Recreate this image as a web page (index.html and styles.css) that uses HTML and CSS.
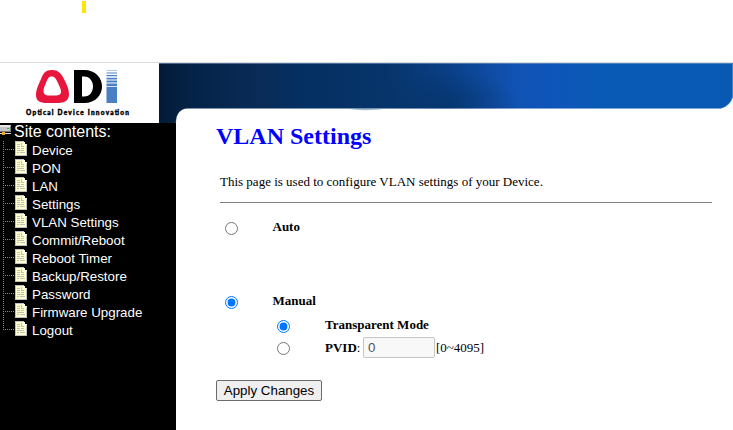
FILE: index.html
```html
<!DOCTYPE html>
<html lang="en">
<head>
<meta charset="utf-8">
<title>VLAN Settings</title>
<link rel="stylesheet" href="styles.css">
</head>
<body>
<svg class="defs" width="0" height="0" aria-hidden="true">
  <symbol id="page" viewBox="0 0 12 15">
    <path fill="#c0c0c0" d="M0 0h9v1h1v2h2v12H0z"/>
    <path fill="#ffffd0" d="M1 1h8v3h2v10H1z"/>
    <path fill="#fff" d="M9 1h1v2h2v1H9z"/>
    <path stroke="#c0c0b8" fill="none" d="M2 3.500h3M6.500 2v4M2 5.500h3M7 5.500h2M2 7.500h3M6 7.500h3M2 9.500h7M2 11.500h2M5 11.500h5"/>
  </symbol>
</svg>
<div class="top"><span class="marker"></span></div>
<header class="header">
  <div class="logo">
    <svg width="159" height="60" viewBox="0 0 159 60">
      <path fill="#e8163c" fill-rule="evenodd" d="M51 7C58 6.500 61 10 64 16C67 22 69 26 69 31C69 38 64 40 57 40H47C40 40 36 38 36 32C36 27 38 23 41 16C43.500 9.500 46 7.200 51 7ZM51.500 13.500C48.500 13.500 47.500 16 46 20C44.500 23.500 43.500 25 43.500 28C43.500 31.500 46 32.500 49 32.500H55C59 32.500 61 31.500 61 28.500C61 26 59.500 23.500 58 20C56 16 55 13.500 51.500 13.500Z"/>
      <path fill="#000" fill-rule="evenodd" d="M74 7H84C108 7 108 40 84 40H74ZM82 13.500V33.500H84C96 33.500 96 13.500 84 13.500Z"/>
      <path fill="#4a80c3" d="M106.500 24h10.500v16h-10.500zM106.500 20.500h10.500v2.800h-10.500zM106.500 17.500h10.500v2h-10.500zM106.500 14.800h10.500v1.600h-10.500zM106.500 12h10.500v1.200h-10.500zM106.500 9.500h10.500v1h-10.500z"/>
      <path fill="#a9c4e4" d="M106.500 7h10.500v1h-10.500z"/>
      <text class="tagline" x="26" y="52" textLength="103" lengthAdjust="spacing">Optical Device Innovation</text>
    </svg>
  </div>
  <svg class="banner" width="574" height="60" viewBox="0 0 574 60">
    <defs>
      <linearGradient id="sea">
        <stop offset="0" stop-color="#031b38"/>
        <stop offset=".06" stop-color="#042347"/>
        <stop offset=".17" stop-color="#0a2b57"/>
        <stop offset=".25" stop-color="#042f62"/>
        <stop offset=".4" stop-color="#07356b"/>
        <stop offset=".5" stop-color="#0a3f86"/>
        <stop offset=".62" stop-color="#1153b4"/>
        <stop offset=".67" stop-color="#0f54b9"/>
        <stop offset=".78" stop-color="#085ab5"/>
        <stop offset="1" stop-color="#0859b3"/>
      </linearGradient>
      <radialGradient id="deep">
        <stop offset="0" stop-color="#042e5c" stop-opacity=".55"/>
        <stop offset="1" stop-color="#042e5c" stop-opacity="0"/>
      </radialGradient>
      <clipPath id="edge"><path d="M0 0H574V34Q571 43 562 45.500H29Q17 46 17 60H0Z"/></clipPath>
    </defs>
    <g clip-path="url(#edge)">
      <path fill="url(#sea)" d="M0 0H574V60H0z"/>
      <ellipse fill="url(#deep)" cx="288" cy="42" rx="75" ry="36"/>
      <path fill="none" stroke="#7999c3" stroke-opacity=".6" d="M0 .5H573.500V34Q571 43 562 45.500H29Q17 46 17 60"/>
    </g>
    <path fill="#668bab" fill-opacity=".6" d="M187 45.500H228Q206 49 187 45.500z"/>
  </svg>
</header>
<div class="main">
  <nav class="side">
    <div class="root">
      <svg width="12" height="14" viewBox="0 0 12 14">
        <path fill="#777" d="M0 3h11v6H0z"/>
        <path fill="#e8e8e8" d="M0 2h11l-1 2H0z"/>
        <path fill="#c4c4c4" d="M0 4h10v4H0z"/>
        <path fill="#2cb52c" d="M7 5h2v1H7z"/>
        <path fill="#ddd" d="M0 10h11v1H0z"/>
        <path fill="#f0a818" d="M2 9h3v3H2z"/>
      </svg>
      <span>Site contents:</span>
    </div>
    <ul class="menu">
      <li><svg class="ico"><use href="#page"/></svg><span>Device</span></li>
      <li><svg class="ico"><use href="#page"/></svg><span>PON</span></li>
      <li><svg class="ico"><use href="#page"/></svg><span>LAN</span></li>
      <li><svg class="ico"><use href="#page"/></svg><span>Settings</span></li>
      <li><svg class="ico"><use href="#page"/></svg><span>VLAN Settings</span></li>
      <li><svg class="ico"><use href="#page"/></svg><span>Commit/Reboot</span></li>
      <li><svg class="ico"><use href="#page"/></svg><span>Reboot Timer</span></li>
      <li><svg class="ico"><use href="#page"/></svg><span>Backup/Restore</span></li>
      <li><svg class="ico"><use href="#page"/></svg><span>Password</span></li>
      <li><svg class="ico"><use href="#page"/></svg><span>Firmware Upgrade</span></li>
      <li><svg class="ico"><use href="#page"/></svg><span>Logout</span></li>
    </ul>
  </nav>
  <main class="content">
    <h1>VLAN Settings</h1>
    <p class="intro">This page is used to configure VLAN settings of your Device.</p>
    <form>
      <div class="row auto"><input type="radio" name="mode"><b>Auto</b></div>
      <div class="row manual"><input type="radio" name="mode" checked><b>Manual</b></div>
      <div class="row sub trans"><input type="radio" name="vlan" checked><b>Transparent Mode</b></div>
      <div class="row sub pvid"><input type="radio" name="vlan"><span class="label"><b>PVID</b>:</span><input class="num" type="text" value="0" disabled><span class="range">[0~4095]</span></div>
      <button class="apply" type="button">Apply Changes</button>
    </form>
  </main>
</div>
</body>
</html>
```
FILE: styles.css
```css
* { box-sizing: border-box; }
body { margin: 0; height: 430px; overflow: hidden; background: #fff; display: flex; flex-direction: column; }
.defs { position: absolute; }
.top { height: 62px; flex: none; padding: 1px 0 0 82px; }
.marker { display: block; width: 4px; height: 12px; background: #ffe500; }
.header { display: flex; flex: none; height: 61px; border-top: 1px solid #dcdcdc; }
.logo { width: 159px; }
.header svg { display: block; }
.tagline { font: 900 6.5px Lato, sans-serif; stroke: #000; stroke-width: .4px; }
.main { display: flex; flex: 1; }
.side { width: 176px; background: #000; color: #fff; font-family: "Liberation Sans", Arial, sans-serif; }
.root { display: flex; height: 18px; font-size: 16px; line-height: 18px; }
.root svg { flex: none; width: 12px; margin-right: 2px; }
.menu { list-style: none; margin: 0 0 0 3px; padding: 0; font-size: 13.33px; }
.menu li {
  display: flex; height: 18px; line-height: 18px;
  background:
    repeating-linear-gradient(90deg, #888 0 1px, transparent 1px 2px) 0 8px / 12px 1px no-repeat,
    repeating-linear-gradient(#888 0 1px, transparent 1px 2px) 0 0 / 1px 18px no-repeat;
}
.menu li:last-child {
  background:
    repeating-linear-gradient(90deg, #888 0 1px, transparent 1px 2px) 0 8px / 12px 1px no-repeat,
    repeating-linear-gradient(#888 0 1px, transparent 1px 2px) 0 0 / 1px 9px no-repeat;
}
.menu span { padding-top: 1px; }
.ico { flex: none; width: 12px; height: 15px; margin: 0 5px 0 12px; }
.content { flex: 1; padding-left: 40px; font: 13px/16px "Liberation Serif", "Times New Roman", serif; color: #000; }
h1 { margin: 0; font-size: 24px; line-height: 27px; color: #00f; }
.intro { margin: 24px 21px 0 4px; height: 29px; border-bottom: 1px solid #808080; }
.row { display: flex; }
.row input[type="radio"] { flex: none; width: 13px; height: 13px; margin: 3px 35px 0 9px; }
.row.auto { margin-top: 16px; height: 74px; }
.row.manual { height: 24px; }
.row.auto input[type="radio"], .row.manual input[type="radio"] { margin-right: 34.5px; }
.row.sub { padding-left: 52px; }
.trans { height: 20px; }
.pvid { height: 20px; align-items: center; }
.row.pvid input[type="radio"] { margin-top: 2px; }
.label, .range { padding-top: 2px; }
.label { width: 38px; }
.num { width: 72px; height: 21px; margin: 0; padding: 1px 4px; border: 1px solid #c5c5c5; border-radius: 2px; background: #f8f8f8; color: #545454; font: 13.33px "Liberation Sans", Arial, sans-serif; }
.range { margin-left: 1px; }
.apply { display: block; margin: 23px 0 0; width: 106px; height: 21px; padding: 0; border: 1px solid #6b6b6b; border-radius: 2px; background: #efefef; color: #000; font: 13.33px "Liberation Sans", Arial, sans-serif; }
```
